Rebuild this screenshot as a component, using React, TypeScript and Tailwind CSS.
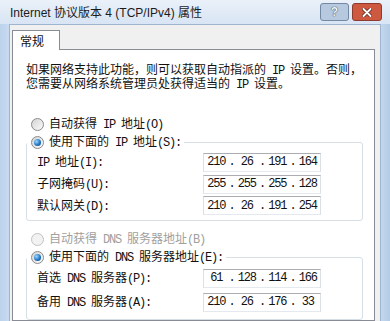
import React from "react"

const latin = "font-['Liberation_Mono',monospace] tracking-[-1.2px]"

// SimSun-like mix: CJK full width, ASCII half width
const T = ({ s }: { s: string }) => {
  const parts = s.split(/([\x20-\x7e]+)/)
  return (
    <>
      {parts.map((p, i) =>
        /[\x20-\x7e]/.test(p) ? (
          <span key={i} className={latin}>
            {p}
          </span>
        ) : (
          p
        )
      )}
    </>
  )
}

const Radio = ({ checked, disabled }: { checked?: boolean; disabled?: boolean }) => (
  <span
    className={
      disabled
        ? "flex h-[13px] w-[13px] shrink-0 items-center justify-center rounded-full border border-[#c2c2c2] bg-[#f2f2f2]"
        : "flex h-[13px] w-[13px] shrink-0 items-center justify-center rounded-full border border-[#8a8a8a] bg-gradient-to-br from-[#d4d4d4] to-[#fbfbfb]"
    }
  >
    {checked && (
      <span className="h-[7px] w-[7px] rounded-full bg-[radial-gradient(circle_at_35%_35%,#9fd8fb,#1a6fbf_60%,#0a4a8c)]" />
    )}
  </span>
)

const IpBox = ({ ip }: { ip: string[] }) => (
  <div className="flex h-[19px] w-[118px] items-center border border-[#abadb3] border-b-[#e3e9ef] border-x-[#dbdfe6] bg-white text-[12px] leading-[14px] text-[#111]">
    {ip.map((n, i) => (
      <React.Fragment key={i}>
        {i > 0 && <span className={latin}>.</span>}
        <span className={`flex-1 text-center ${latin}`}>{n}</span>
      </React.Fragment>
    ))}
  </div>
)

const Row = ({ label, ip, h }: { label: string; ip: string[]; h?: string }) => (
  <div className={`flex items-center ${h ?? "h-[22px]"}`}>
    <div className="w-[166px] leading-[14px]">
      <T s={label} />
    </div>
    <IpBox ip={ip} />
  </div>
)

export default function App() {
  return (
    <div className="flex h-[321px] w-[390px] flex-col overflow-hidden bg-[linear-gradient(90deg,#bcd3ec,#cfe0f3_4%,#cfe0f3_96%,#b3cbe6)] font-['Noto_Sans_CJK_SC',sans-serif] text-[12px] text-[#111]">
      {/* title bar */}
      <div className="flex h-[24px] shrink-0 items-start bg-gradient-to-b from-[#eaf1f9] to-[#d8e5f4] pl-[10px] pr-[8px]">
        <div className="mt-[5px] flex-1 font-['Liberation_Sans','Noto_Sans_CJK_SC',sans-serif] text-[12px] leading-[16px] text-[#1b1b1b]">
          Internet 协议版本 4 (TCP/IPv4) 属性
        </div>
        <div className="mt-[3px] flex shrink-0 gap-[3px]">
          <div className="flex h-[18px] w-[29px] items-center justify-center rounded-[3px] border border-[#7388a3] bg-[#b7c9de]">
            <span className="font-['Liberation_Sans',sans-serif] text-[12px] font-bold leading-none text-[#eef3f9] [text-shadow:0_0_1px_#33475f,0_0_1px_#33475f]">?</span>
          </div>
          <div className="flex h-[18px] w-[30px] items-center justify-center rounded-[3px] border border-[#8e3b2d] bg-[#cd5a40]">
            <svg width="10" height="9" viewBox="0 0 10 9">
              <path d="M1.5 1 L8.5 8 M8.5 1 L1.5 8" stroke="#5a1a10" strokeWidth="3.4" strokeLinecap="round" />
              <path d="M1.5 1 L8.5 8 M8.5 1 L1.5 8" stroke="#ffffff" strokeWidth="2" strokeLinecap="round" />
            </svg>
          </div>
        </div>
      </div>

      {/* dialog body */}
      <div className="mx-[9px] flex flex-1 flex-col border-x border-t border-[#9fb4ce] bg-[#f0f0f0] pl-[2px] pr-[5px] pt-[5px]">
        <div className="relative z-10 -mb-px flex h-[20px] w-[48px] items-center border border-b-0 border-[#898c95] bg-white pl-[7px] text-[12px]">
          常规
        </div>
        <div className="flex-1 border border-[#898c95] bg-white pl-[13px] pr-[11px] pt-[12px]">
          <div className="whitespace-nowrap">
            <div className="h-[14px] leading-[14px]">
              <T s="如果网络支持此功能，则可以获取自动指派的 IP 设置。否则，" />
            </div>
            <div className="h-[14px] leading-[14px]">
              <T s="您需要从网络系统管理员处获得适当的 IP 设置。" />
            </div>
          </div>

          <div className="mt-[25px] flex h-[18px] items-center gap-[5px] pl-[5px] leading-[14px]">
            <Radio />
            <span>
              <T s="自动获得 IP 地址(O)" />
            </span>
          </div>

          <fieldset className="rounded-[3px] border border-[#d5dfe5] pb-[4px] pl-[10px]">
            <legend className="-ml-[10px] flex h-[18px] items-center gap-[5px] bg-white pl-[4px] pr-[3px] leading-[14px]">
              <Radio checked />
              <span>
                <T s="使用下面的 IP 地址(S):" />
              </span>
            </legend>
            <Row label="IP 地址(I):" ip={["210", "26", "191", "164"]} />
            <Row label="子网掩码(U):" ip={["255", "255", "255", "128"]} />
            <Row label="默认网关(D):" ip={["210", "26", "191", "254"]} h="h-[21px]" />
          </fieldset>

          <div className="mt-[9px] flex h-[18px] items-center gap-[5px] pl-[5px] leading-[14px] text-[#a0a0a0]">
            <Radio disabled />
            <span>
              <T s="自动获得 DNS 服务器地址(B)" />
            </span>
          </div>

          <fieldset className="rounded-[3px] border border-[#d5dfe5] pb-[5px] pl-[10px]">
            <legend className="-ml-[10px] flex h-[18px] items-center gap-[5px] bg-white pl-[4px] pr-[3px] leading-[14px]">
              <Radio checked />
              <span>
                <T s="使用下面的 DNS 服务器地址(E):" />
              </span>
            </legend>
            <Row label="首选 DNS 服务器(P):" ip={["61", "128", "114", "166"]} h="h-[24px]" />
            <Row label="备用 DNS 服务器(A):" ip={["210", "26", "176", "33"]} h="h-[24px]" />
          </fieldset>
        </div>
      </div>
    </div>
  )
}
